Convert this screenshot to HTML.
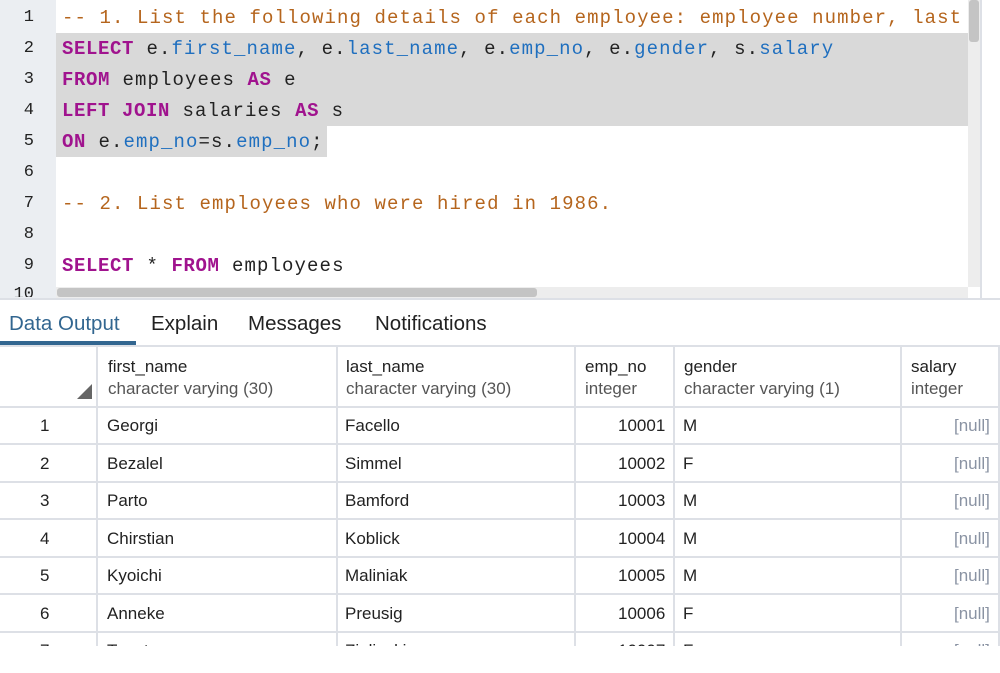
<!DOCTYPE html><html><head><meta charset="utf-8"><style>
*{margin:0;padding:0;box-sizing:border-box}
body{width:1000px;height:673px;background:#fff;position:relative;overflow:hidden;font-family:"Liberation Sans",sans-serif}
.a{position:absolute}
.gut{left:0;top:0;width:56px;height:298px;background:#ebeef2}
.ln{position:absolute;left:0;width:34px;text-align:right;font:17px "Liberation Mono",monospace;color:#222;letter-spacing:0}
.code{position:absolute;left:62px;font:19px "Liberation Mono",monospace;letter-spacing:1.1px;white-space:pre;color:#222}
.c{color:#b5651d}.k{color:#a0138e;font-weight:bold;letter-spacing:0.6px}.p{color:#1f6fbf}
.hl{background:#d9d9d9}
.t{font-size:20.5px;color:#222;position:absolute;top:312px}
.h{position:absolute;background:#dde0e6}
.cell{position:absolute;font-size:17px;color:#222}
.sub{color:#555}
.nul{color:#8a93a3}
</style></head><body>
<div class="a gut"></div>
<div class="a hl" style="left:56px;top:33px;width:912px;height:93px"></div>
<div class="a hl" style="left:56px;top:126px;width:271px;height:31px"></div>
<div class="ln" style="top:8px">1</div>
<div class="ln" style="top:39px">2</div>
<div class="ln" style="top:70px">3</div>
<div class="ln" style="top:101px">4</div>
<div class="ln" style="top:132px">5</div>
<div class="ln" style="top:163px">6</div>
<div class="ln" style="top:194px">7</div>
<div class="ln" style="top:225px">8</div>
<div class="ln" style="top:256px">9</div>
<div class="ln" style="top:285px;height:12px;overflow:hidden">10</div>
<div class="code c" style="top:7px">-- 1. List the following details of each employee: employee number, last</div>
<div class="code" style="top:38px"><span class="k">SELECT</span> e.<span class="p">first_name</span>, e.<span class="p">last_name</span>, e.<span class="p">emp_no</span>, e.<span class="p">gender</span>, s.<span class="p">salary</span></div>
<div class="code" style="top:69px"><span class="k">FROM</span> employees <span class="k">AS</span> e</div>
<div class="code" style="top:100px"><span class="k">LEFT JOIN</span> salaries <span class="k">AS</span> s</div>
<div class="code" style="top:131px"><span class="k">ON</span> e.<span class="p">emp_no</span>=s.<span class="p">emp_no</span>;</div>
<div class="code c" style="top:193px">-- 2. List employees who were hired in 1986.</div>
<div class="code" style="top:255px"><span class="k">SELECT</span> * <span class="k">FROM</span> employees</div>
<div class="a" style="left:968px;top:0;width:12px;height:287px;background:#ededed"></div>
<div class="a" style="left:969px;top:0;width:10px;height:42px;background:#c4c4c4;border-radius:3px"></div>
<div class="a" style="left:56px;top:287px;width:912px;height:11px;background:#ededed"></div>
<div class="a" style="left:57px;top:288px;width:480px;height:9px;background:#c4c4c4;border-radius:3px"></div>
<div class="a" style="left:980px;top:0;width:2px;height:298px;background:#dde0e6"></div>
<div class="a" style="left:0;top:298px;width:1000px;height:2px;background:#dde0e6"></div>
<div class="t" style="left:9px;color:#326690">Data Output</div>
<div class="t" style="left:151px">Explain</div>
<div class="t" style="left:248px">Messages</div>
<div class="t" style="left:375px">Notifications</div>
<div class="a" style="left:0;top:341px;width:136px;height:4px;background:#326690"></div>
<div class="h" style="left:0;top:345px;width:1000px;height:2px"></div>
<div class="a" style="left:0;top:347px;width:1000px;height:299px;overflow:hidden">
<div class="h" style="left:96px;top:0;width:2px;height:300px"></div>
<div class="h" style="left:336px;top:0;width:2px;height:300px"></div>
<div class="h" style="left:574px;top:0;width:2px;height:300px"></div>
<div class="h" style="left:673px;top:0;width:2px;height:300px"></div>
<div class="h" style="left:900px;top:0;width:2px;height:300px"></div>
<div class="h" style="left:998px;top:0;width:2px;height:300px"></div>
<div class="h" style="left:0;top:59px;width:1000px;height:2px"></div>
<div class="h" style="left:0;top:96px;width:1000px;height:2px"></div>
<div class="h" style="left:0;top:134px;width:1000px;height:2px"></div>
<div class="h" style="left:0;top:171px;width:1000px;height:2px"></div>
<div class="h" style="left:0;top:209px;width:1000px;height:2px"></div>
<div class="h" style="left:0;top:246px;width:1000px;height:2px"></div>
<div class="h" style="left:0;top:284px;width:1000px;height:2px"></div>
<svg class="a" style="left:77px;top:37px" width="15" height="15"><polygon points="15,0 15,15 0,15" fill="#666"/></svg>
<div class="cell" style="left:108px;top:9px;line-height:22px">first_name<br><span class="sub">character varying (30)</span></div>
<div class="cell" style="left:346px;top:9px;line-height:22px">last_name<br><span class="sub">character varying (30)</span></div>
<div class="cell" style="left:585px;top:9px;line-height:22px">emp_no<br><span class="sub">integer</span></div>
<div class="cell" style="left:684px;top:9px;line-height:22px">gender<br><span class="sub">character varying (1)</span></div>
<div class="cell" style="left:911px;top:9px;line-height:22px">salary<br><span class="sub">integer</span></div>
</div>
<div class="a" style="left:0;top:408px;width:1000px;height:238px;overflow:hidden">
<div style="position:absolute;top:0;left:0;width:1000px">
<div class="cell" style="top:8px;left:40px">1</div><div class="cell" style="top:8px;left:107px">Georgi</div><div class="cell" style="top:8px;left:345px">Facello</div><div class="cell" style="top:8px;left:618px">10001</div><div class="cell" style="top:8px;left:683px">M</div><div class="cell nul" style="top:8px;left:954px">[null]</div>
<div class="cell" style="top:46px;left:40px">2</div><div class="cell" style="top:46px;left:107px">Bezalel</div><div class="cell" style="top:46px;left:345px">Simmel</div><div class="cell" style="top:46px;left:618px">10002</div><div class="cell" style="top:46px;left:683px">F</div><div class="cell nul" style="top:46px;left:954px">[null]</div>
<div class="cell" style="top:83px;left:40px">3</div><div class="cell" style="top:83px;left:107px">Parto</div><div class="cell" style="top:83px;left:345px">Bamford</div><div class="cell" style="top:83px;left:618px">10003</div><div class="cell" style="top:83px;left:683px">M</div><div class="cell nul" style="top:83px;left:954px">[null]</div>
<div class="cell" style="top:121px;left:40px">4</div><div class="cell" style="top:121px;left:107px">Chirstian</div><div class="cell" style="top:121px;left:345px">Koblick</div><div class="cell" style="top:121px;left:618px">10004</div><div class="cell" style="top:121px;left:683px">M</div><div class="cell nul" style="top:121px;left:954px">[null]</div>
<div class="cell" style="top:158px;left:40px">5</div><div class="cell" style="top:158px;left:107px">Kyoichi</div><div class="cell" style="top:158px;left:345px">Maliniak</div><div class="cell" style="top:158px;left:618px">10005</div><div class="cell" style="top:158px;left:683px">M</div><div class="cell nul" style="top:158px;left:954px">[null]</div>
<div class="cell" style="top:196px;left:40px">6</div><div class="cell" style="top:196px;left:107px">Anneke</div><div class="cell" style="top:196px;left:345px">Preusig</div><div class="cell" style="top:196px;left:618px">10006</div><div class="cell" style="top:196px;left:683px">F</div><div class="cell nul" style="top:196px;left:954px">[null]</div>
<div class="cell" style="top:233px;left:40px">7</div><div class="cell" style="top:233px;left:107px">Tzvetan</div><div class="cell" style="top:233px;left:345px">Zielinski</div><div class="cell" style="top:233px;left:618px">10007</div><div class="cell" style="top:233px;left:683px">F</div><div class="cell nul" style="top:233px;left:954px">[null]</div>
</div></div>
</body></html>
